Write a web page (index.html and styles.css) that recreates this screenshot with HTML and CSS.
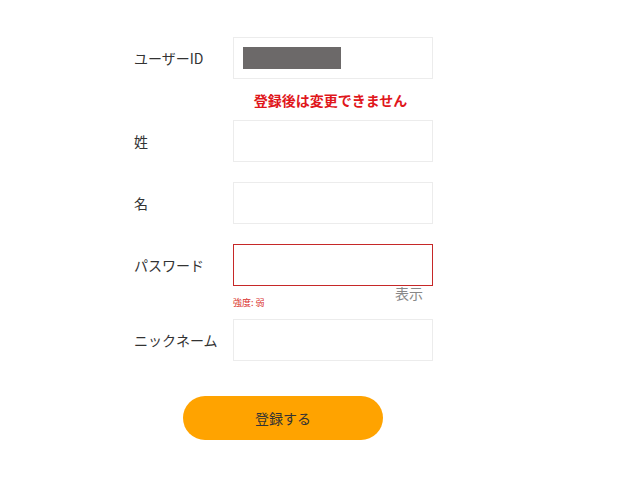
FILE: index.html
```html
<!DOCTYPE html>
<html lang="ja">
<head>
<meta charset="utf-8">
<link rel="stylesheet" href="styles.css">
</head>
<body>
<form class="form">
  <div class="row">
    <label class="label">ユーザーID</label>
    <div class="field"><div class="input"><span class="masked"></span></div></div>
  </div>
  <div class="note">登録後は変更できません</div>
  <div class="row">
    <label class="label">姓</label>
    <div class="field"><div class="input"></div></div>
  </div>
  <div class="row">
    <label class="label">名</label>
    <div class="field"><div class="input"></div></div>
  </div>
  <div class="row row-pw">
    <label class="label">パスワード</label>
    <div class="field">
      <div class="input input-error"></div>
    </div>
  </div>
  <div class="pw-meta">
    <span class="strength">強度: 弱</span>
    <span class="toggle">表示</span>
  </div>
  <div class="row">
    <label class="label">ニックネーム</label>
    <div class="field"><div class="input"></div></div>
  </div>
  <div class="actions">
    <button type="button" class="submit">登録する</button>
  </div>
</form>
</body>
</html>
```

FILE: styles.css
```css
* { box-sizing: border-box; }
html, body { margin: 0; padding: 0; background: #fff; }
body {
  font-family: "Noto Sans CJK JP", "Noto Sans", sans-serif;
  color: #333;
}
.form {
  width: 300px;
  margin-left: 134px;
  padding-top: 37px;
  display: flex;
  flex-direction: column;
}
.row {
  display: grid;
  grid-template-columns: 99px 200px;
  align-items: center;
  margin-bottom: 20px;
}
.label {
  font-size: 14px;
  line-height: 20px;
  color: #333;
  margin-top: -1px;
}
.input {
  height: 42px;
  border: 1px solid #ececec;
  background: #fff;
  display: flex;
  align-items: center;
  padding-left: 9px;
}
.input-error { border-color: #c62828; }
.masked {
  display: block;
  width: 98px;
  height: 22px;
  background: #6c6969;
}
.row:first-child { margin-bottom: 0; }
.note {
  margin-left: 99px;
  width: 200px;
  text-align: center;
  color: #e0161b;
  font-weight: bold;
  font-size: 14px;
  line-height: 20px;
  padding-top: 11px;
  padding-bottom: 10px;
  padding-right: 5px;
  white-space: nowrap;
}
.row-pw { margin-bottom: 0; }
.pw-meta {
  margin-left: 99px;
  width: 200px;
  height: 33px;
  position: relative;
}
.strength {
  position: absolute;
  left: 0;
  top: 11px;
  font-size: 9px;
  line-height: 12px;
  color: #d9302c;
}
.toggle {
  position: absolute;
  right: 10px;
  top: -2px;
  font-size: 14px;
  line-height: 18px;
  color: #888;
}
.actions {
  padding-top: 15px;
  padding-right: 2px;
  display: flex;
  justify-content: center;
}
.submit {
  width: 200px;
  height: 44px;
  border: none;
  border-radius: 22px;
  background: #ffa300;
  color: #333;
  font-family: "Noto Sans CJK JP", "Noto Sans", sans-serif;
  font-size: 14px;
}
```
